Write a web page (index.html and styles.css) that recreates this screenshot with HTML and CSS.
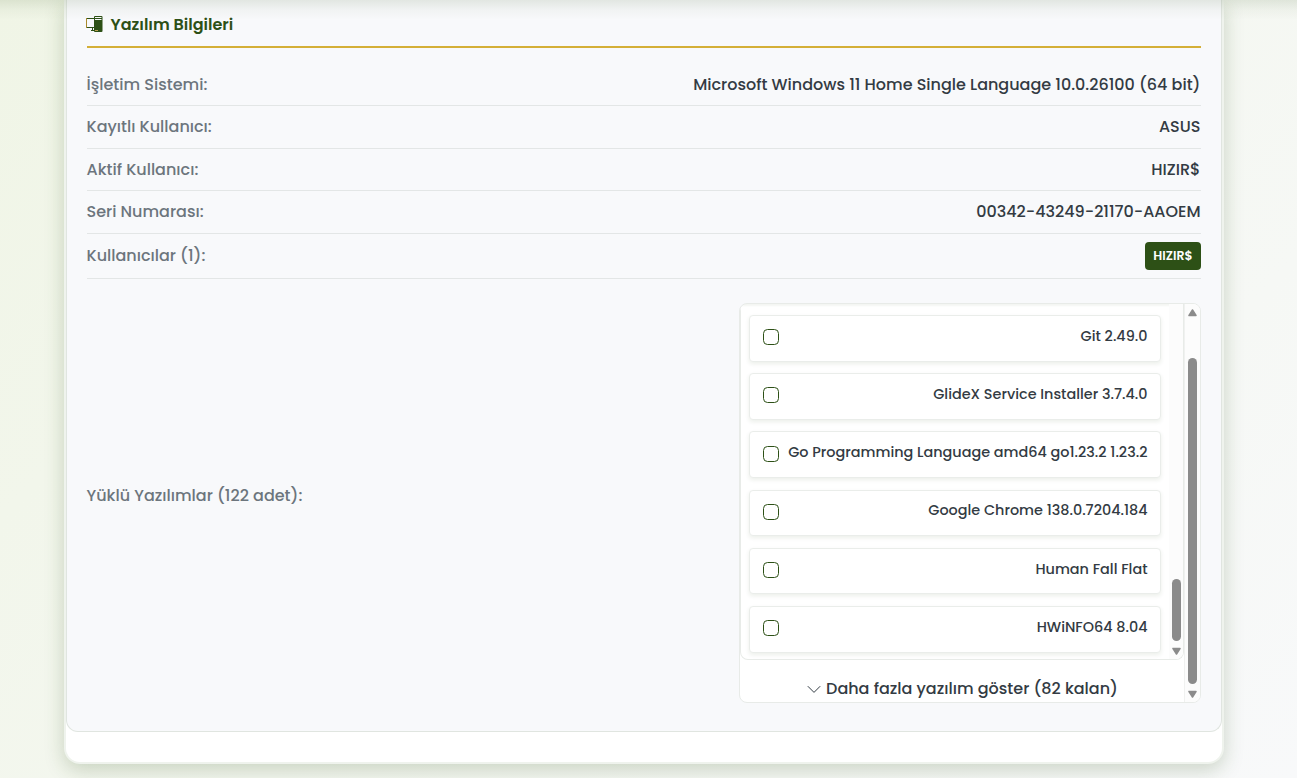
FILE: index.html
```html
<!DOCTYPE html>
<html lang="tr">
<head>
<meta charset="utf-8">
<title>Yazılım Bilgileri</title>
<link rel="stylesheet" href="styles.css">
</head>
<body>
<div class="top-shade"></div>
<main class="card">
  <section class="section">
    <h2 class="title">
      <svg class="title-icon" width="17" height="16" viewBox="0 0 17 16"><path d="M8 2.5H.5v9H8" fill="none" stroke="#2d5016"/><path d="M.5 2v10" stroke="#a98a2c"/><path d="M5 14.500h3M6.500 12v2" fill="none" stroke="#2d5016"/><path d="M9 0h6.500a1 1 0 0 1 1 1v14a1 1 0 0 1-1 1H9a1 1 0 0 1-1-1V1a1 1 0 0 1 1-1z" fill="#2d5016"/><path d="M9 1.500h6.500M9 3.500h6.500" stroke="#f8f9fb"/><path d="M9 14.500h3" stroke="#b8a050"/></svg>
      <span>Yazılım Bilgileri</span>
    </h2>
    <div class="row r1"><span class="label">İşletim Sistemi:</span><span class="value">Microsoft Windows 11 Home Single Language 10.0.26100 (64 bit)</span></div>
    <div class="row r2"><span class="label">Kayıtlı Kullanıcı:</span><span class="value">ASUS</span></div>
    <div class="row r3"><span class="label">Aktif Kullanıcı:</span><span class="value">HIZIR$</span></div>
    <div class="row r4"><span class="label">Seri Numarası:</span><span class="value">00342-43249-21170-AAOEM</span></div>
    <div class="row r5"><span class="label">Kullanıcılar (1):</span><span class="badge">HIZIR$</span></div>
    <div class="row list-row">
      <span class="label list-label">Yüklü Yazılımlar (122 adet):</span>
      <div class="outer">
        <div class="outer-body">
          <div class="inner">
            <div class="items">
              <div class="item"><i class="check"></i><span>Git 2.49.0</span></div>
              <div class="item"><i class="check"></i><span>GlideX Service Installer 3.7.4.0</span></div>
              <div class="item"><i class="check"></i><span>Go Programming Language amd64 go1.23.2 1.23.2</span></div>
              <div class="item"><i class="check"></i><span>Google Chrome 138.0.7204.184</span></div>
              <div class="item"><i class="check"></i><span>Human Fall Flat</span></div>
              <div class="item"><i class="check"></i><span>HWiNFO64 8.04</span></div>
            </div>
            <div class="bar inner-bar"><i class="thumb"></i><svg width="9" height="8" viewBox="0 0 9 8"><path d="M1 1.500h7L4.500 7z" fill="#8b8b8b" stroke="#8b8b8b" stroke-width="1.500" stroke-linejoin="round"/></svg></div>
          </div>
          <div class="more"><svg width="14" height="9" viewBox="0 0 14 9"><path d="M.8 1.200L7 7.400l6.200-6.200" fill="none" stroke="#333b43"/></svg><span>Daha fazla yazılım göster (82 kalan)</span></div>
        </div>
        <div class="bar outer-bar"><svg width="9" height="8" viewBox="0 0 9 8"><path d="M1 6.500h7L4.500 1z" fill="#8b8b8b" stroke="#8b8b8b" stroke-width="1.500" stroke-linejoin="round"/></svg><i class="thumb"></i><svg width="9" height="8" viewBox="0 0 9 8"><path d="M1 1.500h7L4.500 7z" fill="#8b8b8b" stroke="#8b8b8b" stroke-width="1.500" stroke-linejoin="round"/></svg></div>
      </div>
    </div>
  </section>
</main>
</body>
</html>
```
FILE: styles.css
```css
* { box-sizing: border-box; }
body { margin: 0; height: 778px; overflow: hidden; font: 500 16px/24px Poppins, Inter, sans-serif; color: #333b43; background: linear-gradient(135deg, #f0f5e6 0%, #f8f9fa 100%); }
.top-shade { position: absolute; z-index: 2; left: 0; top: 0; width: 100%; height: 20px; background: linear-gradient(rgba(45,80,22,.11), rgba(45,80,22,.035) 50%, rgba(45,80,22,0)); }
.card { width: 1160px; height: 764px; margin-left: 64px; background: #fff; border: 2px solid #eff3ed; border-top: 0; border-radius: 0 0 16px 16px; box-shadow: 0 6px 20px rgba(45,80,22,.22); }
.section { height: 732px; padding: 0 20px; background: #f8f9fb; border: 1px solid #e0e5e0; border-top: 0; border-radius: 0 0 12px 12px; }
.title { margin: 0 0 15px; height: 48px; padding-top: 2px; display: flex; align-items: center; gap: 7px; font-size: 16px; font-weight: 600; color: #2d5016; border-bottom: 2px solid #d4af37; }
.title span { padding-top: 2px; margin-left: -.5px; white-space: nowrap; }
.title-icon { margin-left: -1px; margin-right: 1px; }
.row { display: flex; justify-content: space-between; align-items: center; border-bottom: 1px solid #e3e6e6; white-space: nowrap; }
.label { color: #6c757d; margin-left: -.5px; }
.value { margin-right: .5px; }
.r1, .r2, .r4 { height: 43px; }
.r1 { padding-top: 1px; }
.r3 { height: 42px; }
.r5 { height: 45px; }
.badge { display: flex; align-items: center; justify-content: center; width: 56px; height: 28px; border-radius: 4px; background: #2d5016; color: #fff; font-size: 12.500px; font-weight: 600; }
.list-row { border: 0; padding-top: 24px; align-items: flex-start; }
.list-label { margin-top: 181px; }
.outer { width: 462px; height: 400px; display: flex; background: #fff; border: 1px solid #e8ebe8; border-radius: 8px; overflow: hidden; }
.outer-body { width: 444px; }
.inner { height: 356px; display: flex; border: 1px solid #e8ebe8; border-top: 0; border-radius: 0 0 8px 8px; overflow: hidden; box-shadow: inset 0 3px 2px -1px rgba(45,80,22,.05); }
.items { width: 428px; padding: 11px 0 0 8px; display: flex; flex-direction: column; gap: 11.600px; }
.item { width: 412px; height: 46.600px; flex: none; padding: 0 12.500px 0 13px; display: flex; align-items: center; justify-content: space-between; background: #fff; border: 1px solid #eaedea; border-radius: 4px; box-shadow: 0 2px 4px rgba(45,80,22,.09); font-size: 14.400px; }
.item span { margin-top: -5px; }
.check { width: 16px; height: 16px; margin-top: -2px; border: 1px solid #2d5016; border-radius: 4.500px; }
.bar { display: flex; flex-direction: column; align-items: center; background: #fcfcfc; }
.thumb { width: 9px; border-radius: 5px; background: #8b8b8b; }
.inner-bar { width: 14px; padding-top: 275px; }
.inner-bar .thumb { height: 62px; margin-bottom: 6px; }
.outer-bar { width: 16px; padding-top: 5px; border-left: 1px solid #f0f1f0; }
.outer-bar .thumb { height: 326px; margin: 41px 0 6px; }
.more { height: 42px; padding: 16px 0 0 1px; display: flex; align-items: center; justify-content: center; gap: 5px; }
```
